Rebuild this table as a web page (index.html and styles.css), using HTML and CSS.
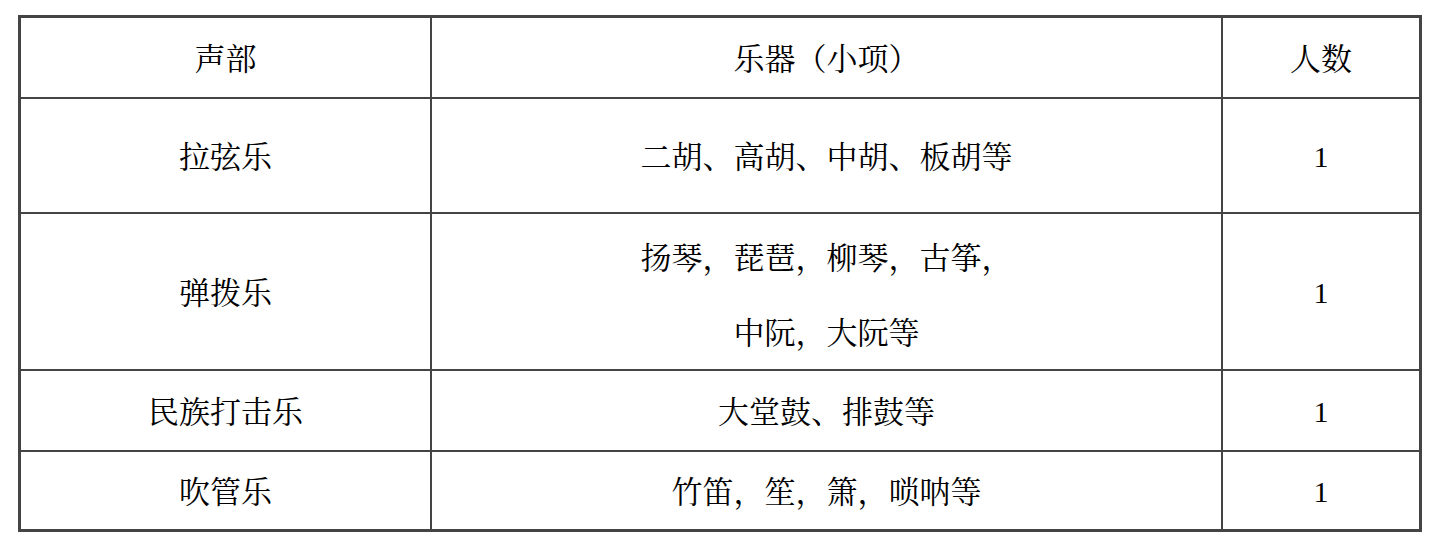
FILE: index.html
```html
<!DOCTYPE html>
<html lang="zh-CN">
<head>
<meta charset="utf-8">
<title>声部</title>
<link rel="stylesheet" href="styles.css">
</head>
<body>
<div class="table">
  <div class="cell">声部</div>
  <div class="cell">乐器（小项）</div>
  <div class="cell">人数</div>

  <div class="cell">拉弦乐</div>
  <div class="cell">二胡、高胡、中胡、板胡等</div>
  <div class="cell num">1</div>

  <div class="cell">弹拨乐</div>
  <div class="cell multi">扬琴，琵琶，柳琴，古筝，<br>中阮，大阮等</div>
  <div class="cell num">1</div>

  <div class="cell">民族打击乐</div>
  <div class="cell">大堂鼓、排鼓等</div>
  <div class="cell num">1</div>

  <div class="cell">吹管乐</div>
  <div class="cell">竹笛，笙，箫，唢呐等</div>
  <div class="cell num">1</div>
</div>
</body>
</html>
```

FILE: styles.css
```css
html, body {
  margin: 0;
  padding: 0;
  background: #ffffff;
}

body {
  font-family: "Liberation Serif", "Noto Serif CJK SC", "Noto Sans CJK SC", serif;
  color: #000000;
}

.table {
  display: grid;
  grid-template-columns: 411px 791px 199px;
  grid-template-rows: 81px 115px 157px 81px 80px;
  width: fit-content;
  margin: 15px 0 0 18px;
  border-top: 3px solid #444444;
  border-left: 3px solid #444444;
}

.cell {
  box-sizing: border-box;
  display: flex;
  align-items: center;
  justify-content: center;
  text-align: center;
  border-right: 2px solid #444444;
  border-bottom: 2px solid #444444;
  font-size: 31px;
  line-height: 40px;
  padding-top: 4px;
}

.cell:nth-child(3n) {
  border-right-width: 3px;
}

.cell:nth-last-child(-n+3) {
  border-bottom-width: 3px;
}

.multi {
  line-height: 75px;
  padding-top: 8px;
}

.num {
  font-size: 30px;
  padding-top: 2px;
}
```
